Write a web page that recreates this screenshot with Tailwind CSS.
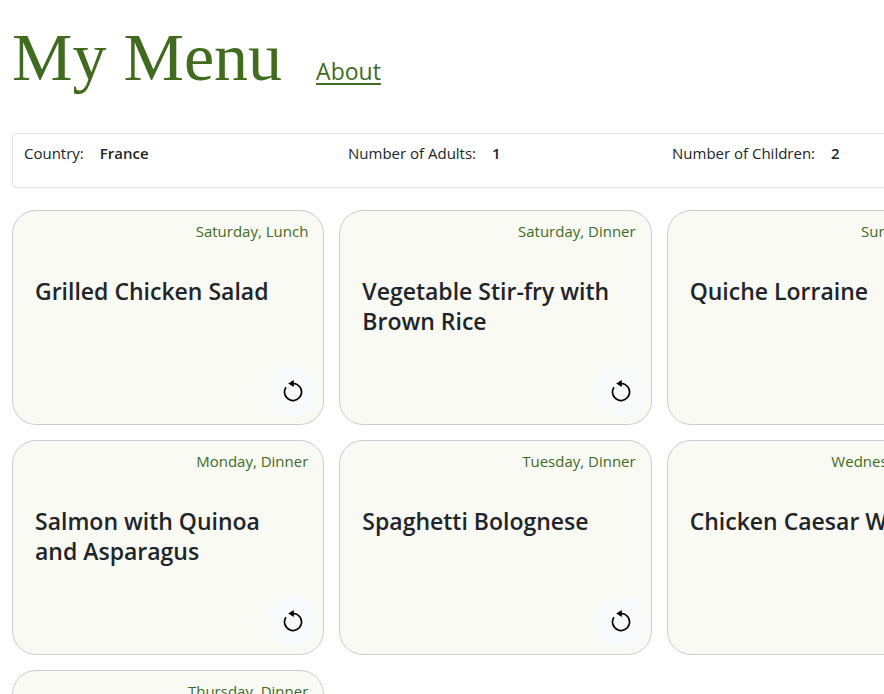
<!DOCTYPE html>
<html lang="en">
<head>
<meta charset="utf-8">
<meta name="viewport" content="width=device-width, initial-scale=1">
<title>My Menu</title>
<script src="https://cdn.jsdelivr.net/npm/@tailwindcss/browser@4"></script>
</head>
<body class="min-w-[1020px] bg-white px-3 pb-4 font-['Segoe_UI','Open_Sans',sans-serif] text-[15px] leading-6 text-[#212529]">
<svg class="hidden" aria-hidden="true">
  <symbol id="redo" viewBox="0 0 20 22">
    <path d="M3 7.2A8.5 8.5 0 1 0 10.4 3.5" fill="none" stroke="currentColor" stroke-width="1.7"/>
    <path d="M5.2 3.5 10.8.1V7Z" fill="currentColor"/>
  </symbol>
</svg>
<header class="flex items-baseline gap-[34px] pt-4 text-[#416b1f]">
  <h1 class="font-['Liberation_Serif',serif] text-[68px] leading-[82px]">My Menu</h1>
  <a href="#about" class="text-[23px] underline decoration-2 underline-offset-3">About</a>
</header>
<main>
  <section class="mt-[35px] grid h-[55px] grid-cols-3 rounded border border-[#dee2e6] px-[11px] pt-[7px]" aria-label="Settings">
    <p class="flex gap-4"><span>Country:</span><b class="font-semibold">France</b></p>
    <p class="flex gap-4"><span>Number of Adults:</span><b class="font-semibold">1</b></p>
    <p class="flex gap-4"><span>Number of Children:</span><b class="font-semibold">2</b></p>
  </section>
  <section class="mt-[22px] grid auto-rows-[215px] grid-cols-3 gap-[15px] pr-[29px]" aria-label="Meals">
    <article class="flex flex-col rounded-3xl border border-[#cccccc] bg-[#f9faf4] pt-2 pr-[5px] pb-2 pl-[22px]">
      <p class="pr-[10px] text-right text-[#416b1f]">Saturday, Lunch</p>
      <h2 class="mt-[33px] pr-4 text-[23px] leading-[30px] font-semibold">Grilled Chicken Salad</h2>
      <button type="button" aria-label="Replace meal" class="mt-auto grid size-[50px] place-items-center self-end rounded-full bg-[#f8f9fb] text-black"><svg class="h-[22px] w-5"><use href="#redo"/></svg></button>
    </article>
    <article class="flex flex-col rounded-3xl border border-[#cccccc] bg-[#f9faf4] pt-2 pr-[5px] pb-2 pl-[22px]">
      <p class="pr-[10px] text-right text-[#416b1f]">Saturday, Dinner</p>
      <h2 class="mt-[33px] pr-4 text-[23px] leading-[30px] font-semibold">Vegetable Stir-fry with Brown Rice</h2>
      <button type="button" aria-label="Replace meal" class="mt-auto grid size-[50px] place-items-center self-end rounded-full bg-[#f8f9fb] text-black"><svg class="h-[22px] w-5"><use href="#redo"/></svg></button>
    </article>
    <article class="flex flex-col rounded-3xl border border-[#cccccc] bg-[#f9faf4] pt-2 pr-[5px] pb-2 pl-[22px]">
      <p class="pr-[10px] text-right text-[#416b1f]">Sunday, Lunch</p>
      <h2 class="mt-[33px] pr-4 text-[23px] leading-[30px] font-semibold">Quiche Lorraine</h2>
      <button type="button" aria-label="Replace meal" class="mt-auto grid size-[50px] place-items-center self-end rounded-full bg-[#f8f9fb] text-black"><svg class="h-[22px] w-5"><use href="#redo"/></svg></button>
    </article>
    <article class="flex flex-col rounded-3xl border border-[#cccccc] bg-[#f9faf4] pt-2 pr-[5px] pb-2 pl-[22px]">
      <p class="pr-[10px] text-right text-[#416b1f]">Monday, Dinner</p>
      <h2 class="mt-[33px] pr-4 text-[23px] leading-[30px] font-semibold">Salmon with Quinoa and Asparagus</h2>
      <button type="button" aria-label="Replace meal" class="mt-auto grid size-[50px] place-items-center self-end rounded-full bg-[#f8f9fb] text-black"><svg class="h-[22px] w-5"><use href="#redo"/></svg></button>
    </article>
    <article class="flex flex-col rounded-3xl border border-[#cccccc] bg-[#f9faf4] pt-2 pr-[5px] pb-2 pl-[22px]">
      <p class="pr-[10px] text-right text-[#416b1f]">Tuesday, Dinner</p>
      <h2 class="mt-[33px] pr-4 text-[23px] leading-[30px] font-semibold">Spaghetti Bolognese</h2>
      <button type="button" aria-label="Replace meal" class="mt-auto grid size-[50px] place-items-center self-end rounded-full bg-[#f8f9fb] text-black"><svg class="h-[22px] w-5"><use href="#redo"/></svg></button>
    </article>
    <article class="flex flex-col rounded-3xl border border-[#cccccc] bg-[#f9faf4] pt-2 pr-[5px] pb-2 pl-[22px]">
      <p class="pr-[10px] text-right text-[#416b1f]">Wednesday, Lunch</p>
      <h2 class="mt-[33px] pr-4 text-[23px] leading-[30px] font-semibold">Chicken Caesar Wrap</h2>
      <button type="button" aria-label="Replace meal" class="mt-auto grid size-[50px] place-items-center self-end rounded-full bg-[#f8f9fb] text-black"><svg class="h-[22px] w-5"><use href="#redo"/></svg></button>
    </article>
    <article class="flex flex-col rounded-3xl border border-[#cccccc] bg-[#f9faf4] pt-2 pr-[5px] pb-2 pl-[22px]">
      <p class="pr-[10px] text-right text-[#416b1f]">Thursday, Dinner</p>
    </article>
  </section>
</main>
</body>
</html>
